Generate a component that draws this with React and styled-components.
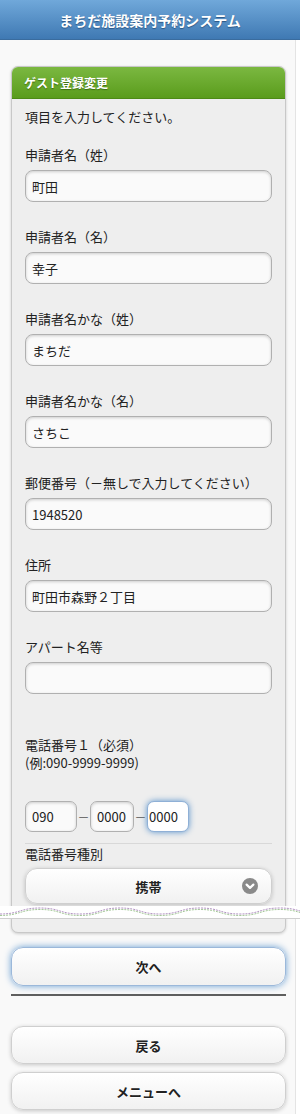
import React from 'react';
import styled, { createGlobalStyle } from 'styled-components';

const GlobalStyle = createGlobalStyle`
  html, body {
    margin: 0;
    padding: 0;
    background: #ffffff;
  }
  body {
    font-family: "Noto Sans CJK JP", "Noto Sans", "Liberation Sans", sans-serif;
    color: #222;
  }
`;

const Page = styled.div`
  position: relative;
  width: 296px;
  min-height: 1114px;
  background: #f9f9f9;
  border-right: 1px solid #e4e4e4;
  box-sizing: border-box;
`;

const TopBar = styled.header`
  height: 40px;
  background: linear-gradient(#70a8da, #3f79b3);
  border-bottom: 1px solid #3a6c9e;
  display: flex;
  align-items: center;
  justify-content: center;
  color: #fff;
  font-size: 14px;
  font-weight: bold;
  text-shadow: 0 1px 1px #2a5685;
  box-sizing: border-box;
  width: 300px;
`;

const Content = styled.main`
  padding: 26px 9px 6px 11px;
`;

const Card = styled.section`
  border: 1px solid #c8c8c8;
  border-radius: 7px;
  background: #eeeeee;
  box-shadow: 0 1px 3px rgba(0, 0, 0, 0.18);
  overflow: hidden;
`;

const CardHead = styled.div`
  height: 31px;
  background: linear-gradient(#7bb841, #5a9c1c);
  border-bottom: 1px solid #4d8a16;
  color: #fff;
  font-size: 12px;
  font-weight: bold;
  text-shadow: 0 1px 1px #3c6d10;
  display: flex;
  align-items: center;
  padding-left: 12px;
`;

const CardBody = styled.div`
  padding: 8px 13px 28px 13px;
`;

const Intro = styled.p`
  margin: 0 0 18px;
  font-size: 13px;
  line-height: 20px;
`;

const Field = styled.div`
  margin-bottom: 25px;
`;

const Label = styled.div`
  font-size: 13px;
  line-height: 20px;
  margin-bottom: 5px;
`;

const TextInput = styled.div`
  height: 32px;
  box-sizing: border-box;
  border: 1px solid #b0b0b0;
  border-radius: 8px;
  background: #fafafa;
  box-shadow: inset 0 1px 3px rgba(0, 0, 0, 0.18);
  display: flex;
  align-items: center;
  padding: 0 6px;
  font-size: 13px;
`;

const PhoneLabel = styled.div`
  font-size: 13px;
  line-height: ${(p) => (p.$note ? 16 : 20)}px;
  margin-top: ${(p) => (p.$note ? 0 : 41)}px;
`;

const PhoneRow = styled.div`
  display: flex;
  align-items: center;
  margin-top: 30px;
  padding-bottom: 11px;
  border-bottom: 1px solid #d8d8d8;
`;

const PhoneBox = styled.div`
  width: ${(p) => p.$w}px;
  height: 31px;
  box-sizing: border-box;
  border: 1px solid ${(p) => (p.$focus ? '#8fb0d6' : '#b0b0b0')};
  border-radius: 7px;
  background: ${(p) => (p.$focus ? '#ffffff' : '#fafafa')};
  box-shadow: ${(p) =>
    p.$focus ? '0 0 6px #5a93cc' : 'inset 0 1px 3px rgba(0, 0, 0, 0.18)'};
  display: flex;
  align-items: center;
  padding: 0 ${(p) => (p.$focus ? 1 : 6)}px;
  font-size: 13px;
`;

const Dash = styled.span`
  width: 13px;
  text-align: center;
  font-size: 12px;
  color: #555;
`;

const SubLabel = styled.div`
  font-size: 13px;
  line-height: 20px;
  margin: 0 0 4px;
`;

const Button = styled.div`
  position: relative;
  height: ${(p) => p.$h || 38}px;
  box-sizing: border-box;
  border: 1px solid ${(p) => (p.$focus ? '#9bb8da' : '#cfcfcf')};
  border-radius: 12px;
  background: linear-gradient(#ffffff, #f1f1f1);
  box-shadow: ${(p) =>
    p.$focus ? '0 0 7px #6a9fd2' : '0 1px 4px rgba(0, 0, 0, 0.2)'};
  display: flex;
  align-items: center;
  justify-content: center;
  font-size: 13px;
  font-weight: bold;
  color: #222;
  text-shadow: 0 1px 0 #fff;
`;

const SelectIcon = styled.span`
  position: absolute;
  right: 13px;
  top: 50%;
  margin-top: -8px;
  width: 16px;
  height: 16px;
  display: flex;
`;

const NextWrap = styled.div`
  margin-top: 14px;
`;

const Rule = styled.hr`
  margin: 8px 0 30px;
  border: 0;
  border-top: 2px solid #5f5f5f;
`;

const Stack = styled.div`
  display: flex;
  flex-direction: column;
  gap: 8px;
`;

const Tear = styled.svg`
  position: absolute;
  left: 0;
  top: 906px;
  width: 300px;
  height: 13px;
  display: block;
`;

const fields = [
  ['申請者名（姓）', '町田'],
  ['申請者名（名）', '幸子'],
  ['申請者名かな（姓）', 'まちだ'],
  ['申請者名かな（名）', 'さちこ'],
  ['郵便番号（－無しで入力してください）', '1948520'],
  ['住所', '町田市森野２丁目'],
  ['アパート名等', ''],
];

const wave = (dy) => {
  let d = `M0 ${8 + dy}`;
  for (let x = 0; x < 300; x += 80) {
    d += ` C${x + 20} ${8 + dy} ${x + 20} ${2 + dy} ${x + 40} ${2 + dy}`;
    d += ` C${x + 60} ${2 + dy} ${x + 60} ${8 + dy} ${x + 80} ${8 + dy}`;
  }
  return d;
};

const App = () => {
  return (
    <>
      <GlobalStyle />
      <Page>
        <TopBar>まちだ施設案内予約システム</TopBar>
        <Content>
          <Card>
            <CardHead>ゲスト登録変更</CardHead>
            <CardBody>
              <Intro>項目を入力してください。</Intro>
              {fields.map(([label, value]) => (
                <Field key={label}>
                  <Label>{label}</Label>
                  <TextInput>{value}</TextInput>
                </Field>
              ))}
              <PhoneLabel>電話番号１（必須）</PhoneLabel>
              <PhoneLabel $note>(例:090-9999-9999)</PhoneLabel>
              <PhoneRow>
                <PhoneBox $w={52}>090</PhoneBox>
                <Dash>－</Dash>
                <PhoneBox $w={44}>0000</PhoneBox>
                <Dash>－</Dash>
                <PhoneBox $w={42} $focus>0000</PhoneBox>
              </PhoneRow>
              <SubLabel>電話番号種別</SubLabel>
              <Button $h={36}>
                携帯
                <SelectIcon>
                  <svg width="16" height="16" viewBox="0 0 16 16">
                    <circle cx="8" cy="8" r="8" fill="#8a8a8a" />
                    <path
                      d="M4.6 6.6 L8 9.9 L11.4 6.6"
                      fill="none"
                      stroke="#fff"
                      strokeWidth="2.2"
                      strokeLinecap="round"
                      strokeLinejoin="round"
                    />
                  </svg>
                </SelectIcon>
              </Button>
            </CardBody>
          </Card>
          <NextWrap>
            <Button $h={39} $focus>
              次へ
            </Button>
          </NextWrap>
          <Rule />
          <Stack>
            <Button>戻る</Button>
            <Button>メニューへ</Button>
          </Stack>
        </Content>
        <Tear viewBox="0 0 300 13">
          <rect x="0" y="0" width="300" height="13" fill="#ffffff" />
          <path d={wave(0)} fill="none" stroke="#b494c4" strokeWidth="1" strokeDasharray="2 1" />
          <path d={wave(1.5)} fill="none" stroke="#a6c99a" strokeWidth="1" strokeDasharray="2 1" />
          <line x1="0" y1="12.5" x2="300" y2="12.5" stroke="#cfcfcf" strokeWidth="1" />
        </Tear>
      </Page>
    </>
  );
};

export default App;
